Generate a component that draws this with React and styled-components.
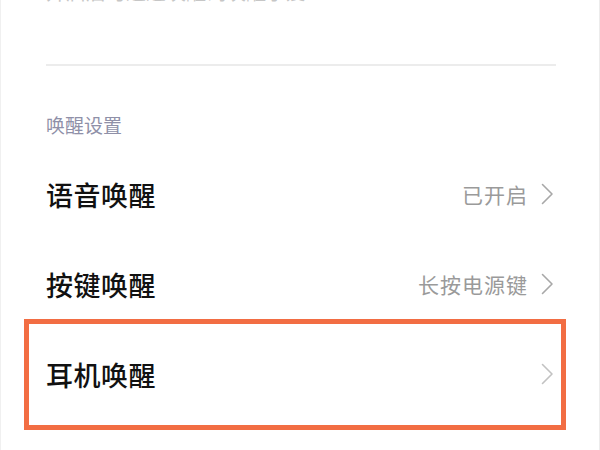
import React from 'react';
import styled, { createGlobalStyle } from 'styled-components';

const GlobalStyle = createGlobalStyle`
  html, body {
    margin: 0;
    padding: 0;
    background: #ffffff;
    overflow: hidden;
  }
  body {
    font-family: "Noto Sans CJK SC", "Noto Sans", sans-serif;
  }
`

const Page = styled.div`
  width: 600px;
  height: 450px;
  box-sizing: border-box;
  padding: 0 45px;
  background: #ffffff;
  border-left: 1px solid #f0f0f0;
  border-right: 1px solid #ececec;
  overflow: hidden;
  display: flow-root;
`
const CutText = styled.div`
  margin-top: -18px;
  height: 20px;
  font-size: 20px;
  line-height: 20px;
  color: #c6c6c6;
  white-space: nowrap;
`
const Divider = styled.div`
  margin-top: 62px;
  height: 2px;
  background: #ececec;
  margin-right: -2px;
`
const SectionTitle = styled.div`
  height: 83px;
  padding-top: 46px;
  box-sizing: border-box;
  font-size: 19px;
  line-height: 26px;
  color: #8f90a8;
`
const Row = styled.div`
  position: relative;
  height: 90px;
  display: flex;
  align-items: center;
  justify-content: space-between;
`
const Title = styled.span`
  font-size: 27px;
  font-weight: 500;
  color: #111111;
  letter-spacing: 0.5px;
`
const Right = styled.div`
  display: flex;
  align-items: center;
  gap: 13px;
`
const Value = styled.span`
  font-size: 21px;
  color: #9a9a9a;
  letter-spacing: 1px;
`
const Chevron = styled.svg`
  width: 13px;
  height: 22px;
  flex: none;
`
const Highlight = styled.div`
  position: absolute;
  left: -22px;
  right: -12px;
  top: -10px;
  bottom: -11px;
  border: 5px solid #f26d43;
  pointer-events: none;
`

const Arrow = ({ color = '#a8a8a8' }) => (
  <Chevron viewBox="0 0 13 22">
    <path d="M1.5 1.5 L11 11 L1.5 20.5" fill="none" stroke={color} strokeWidth="1.6" strokeLinecap="round" strokeLinejoin="round" />
  </Chevron>
)

const rows = [
  { title: '语音唤醒', value: '已开启' },
  { title: '按键唤醒', value: '长按电源键' },
  { title: '耳机唤醒', value: '', marked: true },
]

const App = () => {
  return (
    <>
      <GlobalStyle />
      <Page>
        <CutText>开启后可通过唤醒词唤醒小爱 ›</CutText>
        <Divider />
        <SectionTitle>唤醒设置</SectionTitle>
        {rows.map((r) => (
          <Row key={r.title}>
            <Title>{r.title}</Title>
            <Right>
              {r.value && <Value>{r.value}</Value>}
              <Arrow color={r.marked ? '#c2c2c2' : '#a8a8a8'} />
            </Right>
            {r.marked && <Highlight />}
          </Row>
        ))}
      </Page>
    </>
  );
}

export default App;
